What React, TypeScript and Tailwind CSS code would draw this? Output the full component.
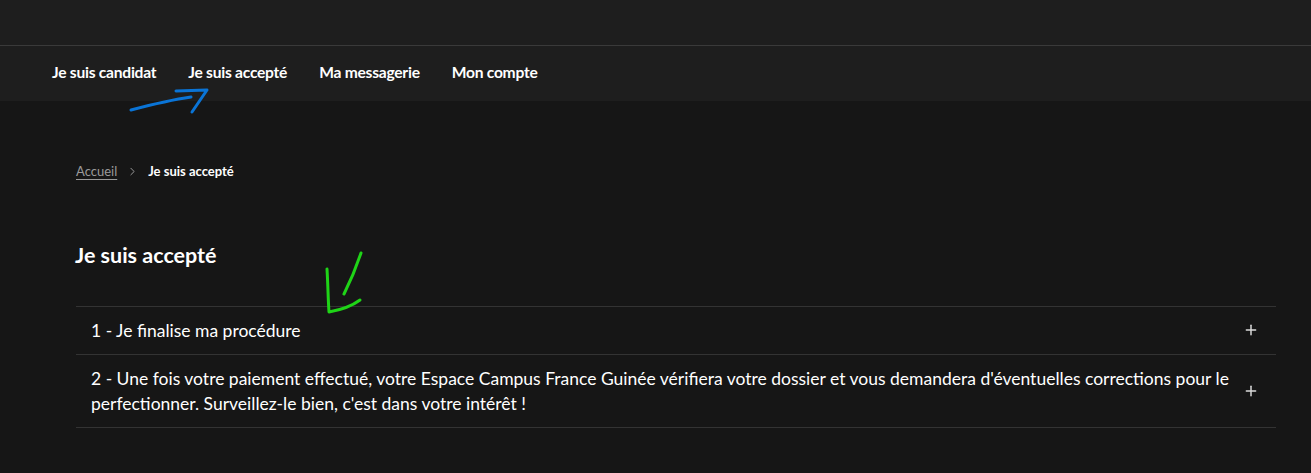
import { ChevronRight, Plus } from "lucide-react";

const navItems = ["Je suis candidat", "Je suis accepté", "Ma messagerie", "Mon compte"];

const steps = [
  "1 - Je finalise ma procédure",
  "2 - Une fois votre paiement effectué, votre Espace Campus France Guinée vérifiera votre dossier et vous demandera d'éventuelles corrections pour le perfectionner. Surveillez-le bien, c'est dans votre intérêt !",
];

export default function App() {
  return (
    <div className="relative min-h-[473px] bg-[#161616] text-white font-['Lato',sans-serif]">
      <header className="bg-[#1e1e1e]">
        <div className="h-[46px] border-b border-[#3a3a3a]" />
        <nav className="h-[55px] flex items-center gap-[32px] pl-[52px] text-[15.6px] font-bold">
          {navItems.map((item) => (
            <a key={item} className="tracking-[-0.25px] -mt-[2px]">
              {item}
            </a>
          ))}
        </nav>
      </header>

      <main className="pl-[76px] pr-[35px]">
        <div className="flex items-center gap-[9px] pt-[61px] text-[13px]">
          <a className="text-[#9a9a9a] underline underline-offset-[3px] decoration-[#9a9a9a]">Accueil</a>
          <ChevronRight className="w-[13px] h-[13px] text-[#9a9a9a]" strokeWidth={1.8} />
          <span className="font-bold">Je suis accepté</span>
        </div>

        <h1 className="mt-[57px] text-[21.5px] font-bold -ml-px">Je suis accepté</h1>

        <div className="mt-[35px] border-t border-[#333]">
          {steps.map((step) => (
            <div key={step} className="flex items-center border-b border-[#333] py-[11px] pl-[15px] pr-[17px]">
              <p className="flex-1 pr-[4px] text-[17.5px] leading-[25px]">{step}</p>
              <Plus className="w-[16px] h-[16px] text-[#dcdcdc]" strokeWidth={2.2} />
            </div>
          ))}
        </div>
      </main>

      <svg className="absolute left-0 top-0 pointer-events-none" width="1311" height="473" fill="none" strokeLinecap="round" strokeLinejoin="round">
        <path d="M131 110 C150 105 170 100 191 97" stroke="#0a74d6" strokeWidth="3" />
        <path d="M176 91 L207 90 L192 112" stroke="#0a74d6" strokeWidth="3" />
        <path d="M361 253 C356 268 350 282 344 294" stroke="#1fd417" strokeWidth="3" />
        <path d="M327 269 C328 285 328 298 329 312 C340 310 352 306 360 300" stroke="#1fd417" strokeWidth="3" />
      </svg>
    </div>
  );
}
